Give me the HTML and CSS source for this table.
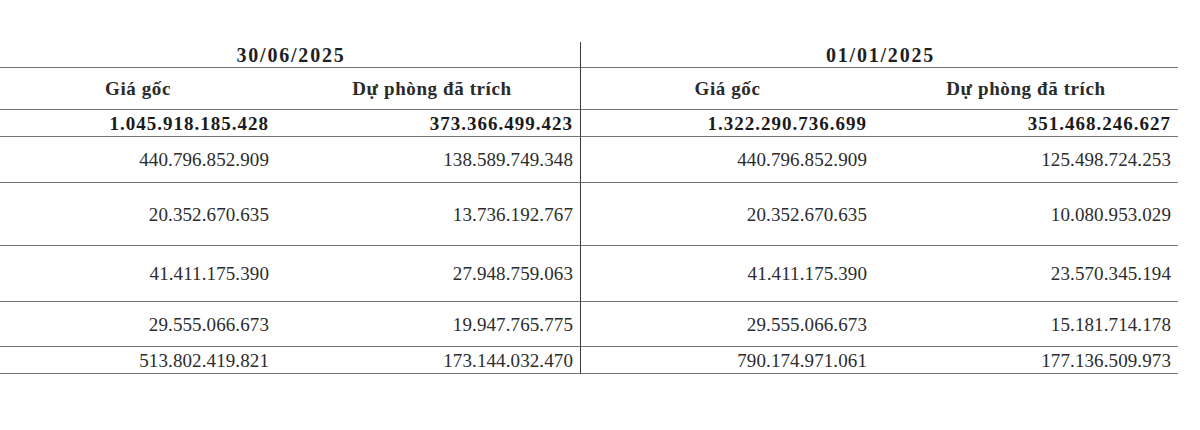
FILE: index.html
```html
<!DOCTYPE html>
<html lang="vi">
<head>
<meta charset="utf-8">
<title>Dự phòng</title>
<link rel="stylesheet" href="styles.css">
</head>
<body>
<div class="page">
  <table class="sheet">
    <colgroup>
      <col class="c1"><col class="c2"><col class="c3"><col class="c4">
    </colgroup>
    <tr class="r-date">
      <td colspan="2" class="date">30/06/2025</td>
      <td colspan="2" class="date split">01/01/2025</td>
    </tr>
    <tr class="r-head">
      <td class="head">Giá gốc</td>
      <td class="head shift">Dự phòng đã trích</td>
      <td class="head split">Giá gốc</td>
      <td class="head">Dự phòng đã trích</td>
    </tr>
    <tr class="r-total">
      <td class="num bold">1.045.918.185.428</td>
      <td class="num bold">373.366.499.423</td>
      <td class="num bold split">1.322.290.736.699</td>
      <td class="num bold">351.468.246.627</td>
    </tr>
    <tr class="r-a">
      <td class="num">440.796.852.909</td>
      <td class="num">138.589.749.348</td>
      <td class="num split">440.796.852.909</td>
      <td class="num">125.498.724.253</td>
    </tr>
    <tr class="r-b">
      <td class="num">20.352.670.635</td>
      <td class="num">13.736.192.767</td>
      <td class="num split">20.352.670.635</td>
      <td class="num">10.080.953.029</td>
    </tr>
    <tr class="r-c">
      <td class="num">41.411.175.390</td>
      <td class="num">27.948.759.063</td>
      <td class="num split">41.411.175.390</td>
      <td class="num">23.570.345.194</td>
    </tr>
    <tr class="r-d">
      <td class="num">29.555.066.673</td>
      <td class="num">19.947.765.775</td>
      <td class="num split">29.555.066.673</td>
      <td class="num">15.181.714.178</td>
    </tr>
    <tr class="r-e">
      <td class="num">513.802.419.821</td>
      <td class="num">173.144.032.470</td>
      <td class="num split">790.174.971.061</td>
      <td class="num">177.136.509.973</td>
    </tr>
  </table>
</div>
</body>
</html>
```
FILE: styles.css
```css
html, body {
  margin: 0;
  padding: 0;
  background: #ffffff;
}

.page {
  width: 1200px;
  height: 430px;
  padding-top: 42px;
  box-sizing: border-box;
  font-family: "Liberation Serif", "Times New Roman", serif;
  font-size: 19px;
  color: #1f1f1f;
}

.sheet {
  border-collapse: separate;
  border-spacing: 0;
  table-layout: fixed;
  width: 1178px;
}

.c1 { width: 276px; }
.c2 { width: 304px; }
.c3 { width: 294px; }
.c4 { width: 304px; }

.sheet td {
  box-sizing: border-box;
  padding: 0 7px 0 0;
  border-bottom: 1px solid #747474;
  vertical-align: middle;
  white-space: nowrap;
  line-height: 1;
}

.sheet td.split {
  border-left: 1px solid #3a3a3a;
}

.r-date td { height: 26px; }
.r-head td { height: 42px; }
.r-total td { height: 27px; }
.r-a td { height: 46px; }
.r-b td { height: 63px; }
.r-c td { height: 56px; }
.r-d td { height: 45px; }
.r-e td { height: 27px; }

.sheet td.date {
  text-align: center;
  font-weight: bold;
  font-size: 20px;
  letter-spacing: 1.8px;
  padding: 0 0 0 2px;
}

.sheet td.head {
  text-align: center;
  font-weight: bold;
  letter-spacing: 0.6px;
  color: #2a2a2a;
  padding: 0;
}

.sheet td.head.shift {
  padding-left: 8px;
}

.num {
  text-align: right;
  letter-spacing: 0.1px;
  color: #2c2c2c;
}

.num.bold {
  font-weight: bold;
  letter-spacing: 1px;
  color: #1a1a1a;
}
```
